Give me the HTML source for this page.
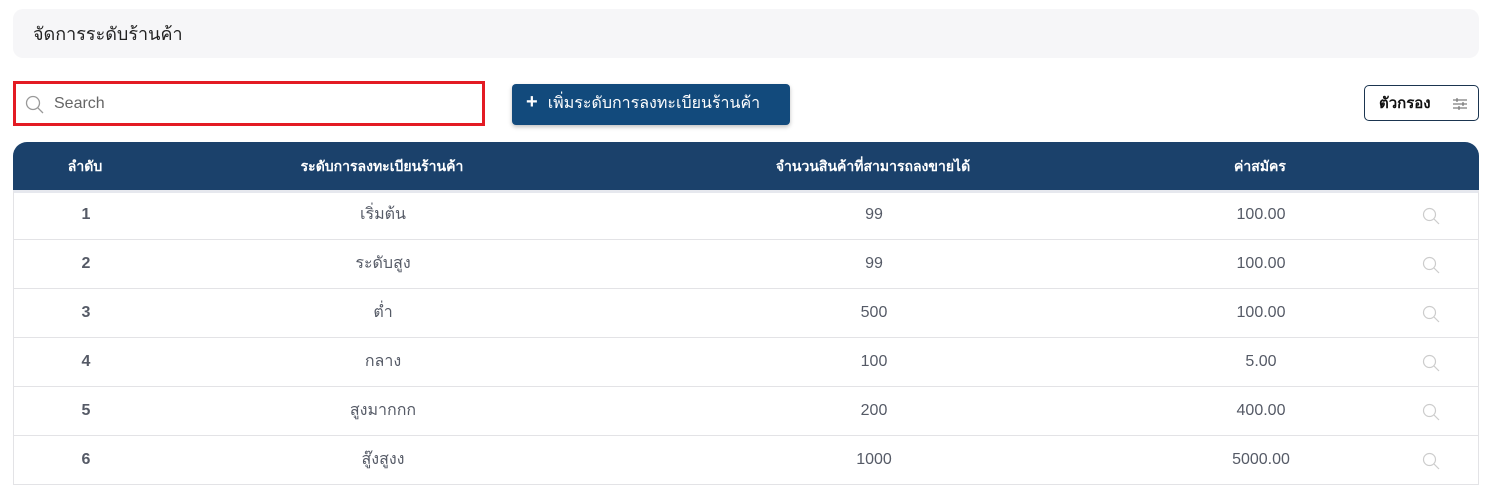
<!DOCTYPE html>
<html><head><meta charset="utf-8"><style>
*{box-sizing:border-box;margin:0;padding:0}
body{width:1485px;height:493px;background:#fff;font-family:"Liberation Sans","Noto Sans CJK SC",sans-serif;overflow:hidden;position:relative;color:#4a4a55}
.hdr{position:absolute;left:13px;top:9px;width:1466px;height:49px;background:#f6f6f8;border-radius:10px;font-size:18px;color:#222;padding:10px 0 0 20px}
.search{position:absolute;left:13px;top:81px;width:472px;height:45px;border:3px solid #e31b23;background:#fff}
.search span{position:absolute;left:38px;top:11px;font-size:16px;color:#666}
.btn{position:absolute;left:512px;top:84px;width:278px;height:41px;background:#124a7c;border-radius:4px;color:#fff;font-size:16px;box-shadow:0 2px 4px rgba(0,0,0,.25);padding:7px 0 0 14px}
.filter{position:absolute;left:1364px;top:85px;width:115px;height:36px;border:1px solid #1b3550;border-radius:5px;font-size:15px;font-weight:bold;color:#111;padding:5px 0 0 14px}
.th{position:absolute;left:13px;top:142px;width:1466px;height:48px;background:#1b416b;border-radius:14px 14px 0 0;color:#fff;font-weight:bold;font-size:14px}
.c{position:absolute;transform:translateX(-50%);white-space:nowrap}
.row{position:absolute;left:13px;width:1466px;height:49px;border:1px solid #e3e3e6;border-top:none;font-size:16px;color:#555a66}
.row .c{top:15px}
.row .t{top:11px}
.th .c{top:14px}
svg.m{position:absolute;left:1408px;top:16px}
</style></head><body>
<div class="hdr">จัดการระดับร้านค้า</div>
<div class="search"><svg style="position:absolute;left:9px;top:11px" width="20" height="20" viewBox="0 0 20 20"><circle cx="8" cy="8" r="6.5" fill="none" stroke="#999" stroke-width="1.3"/><line x1="12.8" y1="12.8" x2="18" y2="18" stroke="#999" stroke-width="1.3"/></svg><span>Search</span></div>
<div class="btn"><b style="font-size:20px;margin-right:10px">+</b>เพิ่มระดับการลงทะเบียนร้านค้า</div>
<div class="filter">ตัวกรอง<svg style="position:absolute;left:88px;top:12px" width="14" height="12" viewBox="0 0 14 12"><g stroke="#777" stroke-width="1.2"><line x1="0" y1="2" x2="14" y2="2"/><line x1="0" y1="6" x2="14" y2="6"/><line x1="0" y1="10" x2="14" y2="10"/><line x1="4" y1="0" x2="4" y2="4"/><line x1="10" y1="4" x2="10" y2="8"/><line x1="6" y1="8" x2="6" y2="12"/></g></svg></div>
<div class="th"><span class="c" style="left:72px">ลำดับ</span><span class="c" style="left:369px">ระดับการลงทะเบียนร้านค้า</span><span class="c" style="left:860px">จำนวนสินค้าที่สามารถลงขายได้</span><span class="c" style="left:1247px">ค่าสมัคร</span></div>
<div class="row" style="top:190px;height:50px;border-top:3px solid #e6e8ee"><span class="c" style="left:72px;font-weight:bold;top:13px">1</span><span class="c t" style="left:369px;top:9px">เริ่มต้น</span><span class="c" style="left:860px;top:13px">99</span><span class="c" style="left:1247px;top:13px">100.00</span><svg class="m" style="top:14px" width="18" height="18" viewBox="0 0 18 18"><circle cx="7.5" cy="7.5" r="6" fill="none" stroke="#ccc" stroke-width="1.2"/><line x1="12" y1="12" x2="17" y2="17" stroke="#ccc" stroke-width="1.2"/></svg></div>
<div class="row" style="top:240px"><span class="c" style="left:72px;font-weight:bold">2</span><span class="c t" style="left:369px">ระดับสูง</span><span class="c" style="left:860px">99</span><span class="c" style="left:1247px">100.00</span><svg class="m" width="18" height="18" viewBox="0 0 18 18"><circle cx="7.5" cy="7.5" r="6" fill="none" stroke="#ccc" stroke-width="1.2"/><line x1="12" y1="12" x2="17" y2="17" stroke="#ccc" stroke-width="1.2"/></svg></div>
<div class="row" style="top:289px"><span class="c" style="left:72px;font-weight:bold">3</span><span class="c t" style="left:369px">ต่ำ</span><span class="c" style="left:860px">500</span><span class="c" style="left:1247px">100.00</span><svg class="m" width="18" height="18" viewBox="0 0 18 18"><circle cx="7.5" cy="7.5" r="6" fill="none" stroke="#ccc" stroke-width="1.2"/><line x1="12" y1="12" x2="17" y2="17" stroke="#ccc" stroke-width="1.2"/></svg></div>
<div class="row" style="top:338px"><span class="c" style="left:72px;font-weight:bold">4</span><span class="c t" style="left:369px">กลาง</span><span class="c" style="left:860px">100</span><span class="c" style="left:1247px">5.00</span><svg class="m" width="18" height="18" viewBox="0 0 18 18"><circle cx="7.5" cy="7.5" r="6" fill="none" stroke="#ccc" stroke-width="1.2"/><line x1="12" y1="12" x2="17" y2="17" stroke="#ccc" stroke-width="1.2"/></svg></div>
<div class="row" style="top:387px"><span class="c" style="left:72px;font-weight:bold">5</span><span class="c t" style="left:369px">สูงมากกก</span><span class="c" style="left:860px">200</span><span class="c" style="left:1247px">400.00</span><svg class="m" width="18" height="18" viewBox="0 0 18 18"><circle cx="7.5" cy="7.5" r="6" fill="none" stroke="#ccc" stroke-width="1.2"/><line x1="12" y1="12" x2="17" y2="17" stroke="#ccc" stroke-width="1.2"/></svg></div>
<div class="row" style="top:436px"><span class="c" style="left:72px;font-weight:bold">6</span><span class="c t" style="left:369px">สู๊งสูงง</span><span class="c" style="left:860px">1000</span><span class="c" style="left:1247px">5000.00</span><svg class="m" width="18" height="18" viewBox="0 0 18 18"><circle cx="7.5" cy="7.5" r="6" fill="none" stroke="#ccc" stroke-width="1.2"/><line x1="12" y1="12" x2="17" y2="17" stroke="#ccc" stroke-width="1.2"/></svg></div>
</body></html>
